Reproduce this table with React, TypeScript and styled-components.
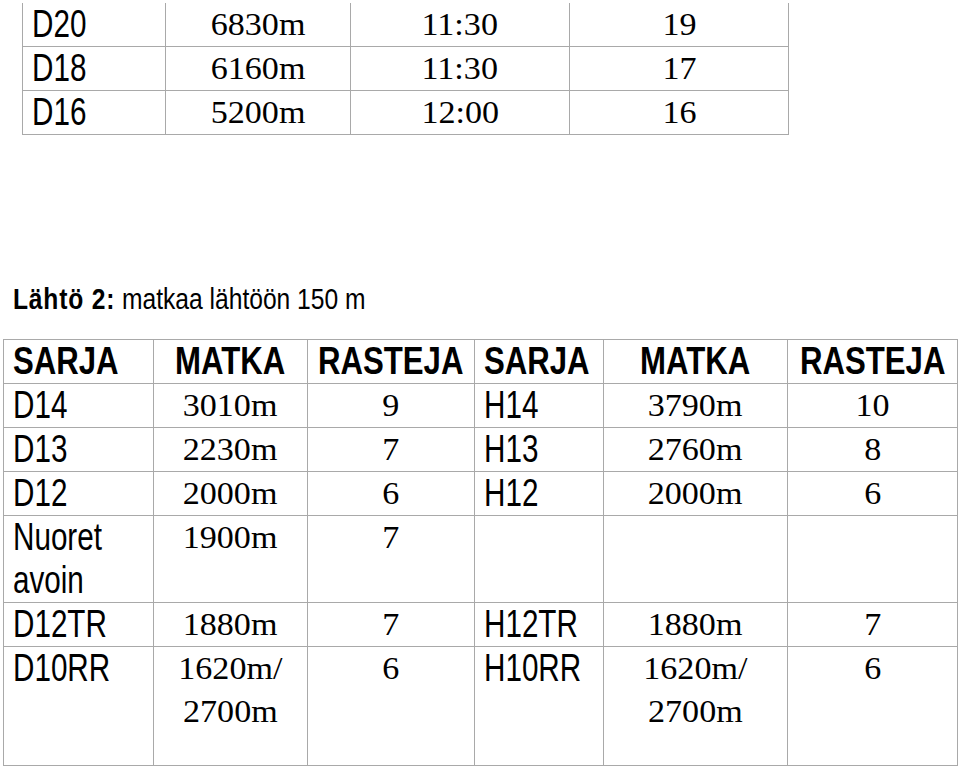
import React from 'react';
import styled, {createGlobalStyle} from 'styled-components';

const GlobalStyle = createGlobalStyle`
  html, body {
    margin: 0;
    padding: 0;
    background: #fff;
  }
  body {
    font-family: "Liberation Sans", Arial, sans-serif;
    color: #000;
  }
`

type Kind = 'name' | 'num' | 'head'

type CellData = {
    text: React.ReactNode
    kind?: Kind
}

const topColumns = '143px 185px 219px 219px'
const mainColumns = '150px 154px 167px 129px 184px 170px'

const topRows: CellData[][] = [
    [{text: 'D20'}, {text: '6830m', kind: 'num'}, {text: '11:30', kind: 'num'}, {text: '19', kind: 'num'}],
    [{text: 'D18'}, {text: '6160m', kind: 'num'}, {text: '11:30', kind: 'num'}, {text: '17', kind: 'num'}],
    [{text: 'D16'}, {text: '5200m', kind: 'num'}, {text: '12:00', kind: 'num'}, {text: '16', kind: 'num'}],
]

const header: CellData[] = [
    {text: 'SARJA'},
    {text: 'MATKA', kind: 'head'},
    {text: 'RASTEJA', kind: 'head'},
    {text: 'SARJA'},
    {text: 'MATKA', kind: 'head'},
    {text: 'RASTEJA', kind: 'head'},
]

type MainRow = { cells: CellData[], height?: number }

const mainRows: MainRow[] = [
    {cells: [{text: 'D14'}, {text: '3010m', kind: 'num'}, {text: '9', kind: 'num'}, {text: 'H14'}, {text: '3790m', kind: 'num'}, {text: '10', kind: 'num'}]},
    {cells: [{text: 'D13'}, {text: '2230m', kind: 'num'}, {text: '7', kind: 'num'}, {text: 'H13'}, {text: '2760m', kind: 'num'}, {text: '8', kind: 'num'}]},
    {cells: [{text: 'D12'}, {text: '2000m', kind: 'num'}, {text: '6', kind: 'num'}, {text: 'H12'}, {text: '2000m', kind: 'num'}, {text: '6', kind: 'num'}]},
    {cells: [{text: <>Nuoret<br/>avoin</>}, {text: '1900m', kind: 'num'}, {text: '7', kind: 'num'}, {text: ''}, {text: '', kind: 'num'}, {text: '', kind: 'num'}]},
    {cells: [{text: 'D12TR'}, {text: '1880m', kind: 'num'}, {text: '7', kind: 'num'}, {text: 'H12TR'}, {text: '1880m', kind: 'num'}, {text: '7', kind: 'num'}]},
    {
        height: 118,
        cells: [{text: 'D10RR'}, {text: <>1620m/<br/>2700m</>, kind: 'num'}, {text: '6', kind: 'num'}, {text: 'H10RR'}, {text: <>1620m/<br/>2700m</>, kind: 'num'}, {text: '6', kind: 'num'}]
    },
]

const renderCell = (cell: CellData, i: number, bold = false, height?: number) => {
    const kind = cell.kind ?? 'name'
    return (
        <Cell key={i} $kind={kind} $height={height}>
            <CellText $kind={kind} $bold={bold}>{cell.text}</CellText>
        </Cell>
    )
}

export default function App() {
    return (
        <Page>
            <GlobalStyle/>
            <TopSheet>
                {topRows.map((row, r) => (
                    <Row key={r} $columns={topColumns}>
                        {row.map((cell, i) => renderCell(cell, i))}
                    </Row>
                ))}
            </TopSheet>

            <Heading>
                <HeadingText>
                    <Strong>Lähtö 2:</Strong> matkaa lähtöön 150 m
                </HeadingText>
            </Heading>

            <MainSheet>
                <Row $columns={mainColumns}>
                    {header.map((cell, i) => renderCell(cell, i, true))}
                </Row>
                {mainRows.map((row, r) => (
                    <Row key={r} $columns={mainColumns}>
                        {row.cells.map((cell, i) => renderCell(cell, i, false, row.height))}
                    </Row>
                ))}
            </MainSheet>
        </Page>
    );
}

const Page = styled.div`
  width: 960px;
  height: 767px;
  overflow: hidden;
  padding-top: 3px;
  box-sizing: border-box;
`

const Sheet = styled.div`
  display: flex;
  flex-direction: column;
  border-left: 1px solid #a9a9a9;
  width: max-content;
`

const TopSheet = styled(Sheet)`
  margin-left: 22px;
`

const MainSheet = styled(Sheet)`
  margin-left: 3px;
  border-top: 1px solid #a9a9a9;
`

const Row = styled.div<{ $columns: string }>`
  display: grid;
  grid-template-columns: ${props => props.$columns};
`

const Cell = styled.div<{ $kind: Kind, $height?: number }>`
  box-sizing: border-box;
  display: flex;
  align-items: flex-start;
  justify-content: ${props => props.$kind === 'name' ? 'flex-start' : 'center'};
  padding-left: ${props => props.$kind === 'name' ? '9px' : '0'};
  min-height: ${props => (props.$height ?? 43) + 1}px;
  border-right: 1px solid #a9a9a9;
  border-bottom: 1px solid #a9a9a9;
  overflow: hidden;
`

// the sheet uses a narrow sans and a wide serif, so the glyphs get stretched
const CellText = styled.span<{ $kind: Kind, $bold: boolean }>`
  display: inline-block;
  flex-shrink: 0;
  white-space: nowrap;
  line-height: 43px;
  text-align: ${props => props.$kind === 'name' ? 'left' : 'center'};
  font-family: ${props => props.$kind === 'num'
          ? '"Liberation Serif", "Times New Roman", serif'
          : '"Liberation Sans", Arial, sans-serif'};
  font-size: ${props => props.$kind === 'num' ? '31px' : '38px'};
  font-weight: ${props => props.$bold ? 700 : 400};
  transform-origin: ${props => props.$kind === 'name' ? 'left center' : 'center center'};
  transform: scaleX(${props => props.$kind === 'num' ? 1.1 : props.$bold ? 0.82 : 0.78});
`

const Heading = styled.p`
  margin: 146px 0 22px 13px;
  font-size: 30px;
  line-height: 36px;
  white-space: nowrap;
`

const HeadingText = styled.span`
  display: inline-block;
  transform-origin: left center;
  transform: scaleX(0.82);
`

const Strong = styled.strong`
  font-weight: 700;
  letter-spacing: 1px;
`
